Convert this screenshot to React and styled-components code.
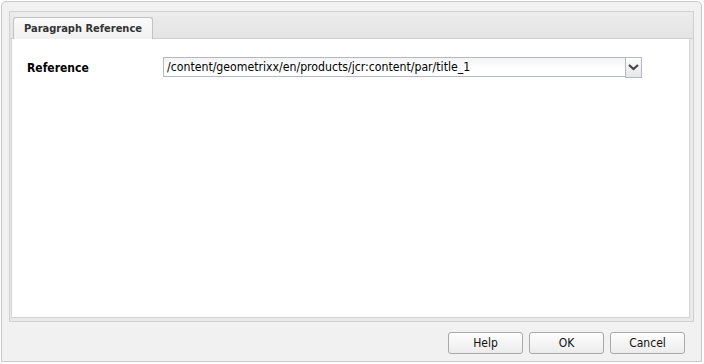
import React from 'react';
import styled, { createGlobalStyle } from 'styled-components';

const Global = createGlobalStyle`
  html, body {
    margin: 0;
    padding: 0;
    background: #ffffff;
  }
  body {
    font-family: 'DejaVu Sans Condensed', Tahoma, 'Liberation Sans', sans-serif;
    font-size: 12px;
    color: #000;
  }
`;

const Window = styled.div`
  box-sizing: border-box;
  width: 701px;
  height: 361px;
  margin: 1px 0 0 1px;
  border: 1px solid #c9c9c9;
  border-radius: 5px 5px 0 0;
  background: #f1f1f1;
  display: flex;
  flex-direction: column;
  padding: 9px 7px 0 7px;
`;

const Panel = styled.div`
  flex: 0 0 auto;
  height: 309px;
  border: 1px solid #d0d0d0;
  background: #e9e9e9;
  display: flex;
  flex-direction: column;
`;

const TabStrip = styled.div`
  height: 23px;
  padding: 3px 0 0 3px;
  display: flex;
  align-items: flex-end;
  border-bottom: 1px solid #cfcfcf;
  background: linear-gradient(#ececec, #e4e4e4);
`;

const Tab = styled.div`
  height: 21px;
  padding: 0 10px;
  margin-bottom: -1px;
  border: 1px solid #c2c2c2;
  border-bottom: none;
  border-radius: 3px 3px 0 0;
  background: linear-gradient(#fafafa, #f1f1f1);
  font-weight: bold;
  font-size: 11px;
  color: #333;
  display: flex;
  align-items: center;
`;

const Body = styled.div`
  flex: 1;
  margin: 0 3px 3px 1px;
  border: 1px solid #d3d3d3;
  border-top: none;
  background: #fff;
  padding: 18px 15px;
`;

const Row = styled.div`
  display: flex;
  align-items: center;
`;

const Label = styled.label`
  width: 136px;
  font-weight: bold;
  font-size: 12px;
`;

const Combo = styled.div`
  display: flex;
  height: 21px;
`;

const Input = styled.div`
  box-sizing: border-box;
  width: 462px;
  height: 20px;
  border: 1px solid #b5b8c8;
  border-right: none;
  background: linear-gradient(#f3f3f3, #fff 60%);
  padding: 2px 3px;
  font-size: 12.2px;
  line-height: 15px;
  white-space: nowrap;
`;

const Trigger = styled.div`
  box-sizing: border-box;
  width: 17px;
  height: 21px;
  border: 1px solid #b5b8c8;
  background: linear-gradient(#fdfdfd, #e6e6e6);
  display: flex;
  align-items: center;
  justify-content: center;
`;

const Footer = styled.div`
  flex: 1;
  display: flex;
  justify-content: flex-end;
  align-items: center;
  gap: 6px;
  padding: 2px 9px 0 0;
`;

const Button = styled.button`
  width: 75px;
  height: 22px;
  border: 1px solid #a9a9a9;
  border-radius: 3px;
  background: linear-gradient(#fdfdfd, #ececec);
  font-family: 'DejaVu Sans Condensed', Tahoma, 'Liberation Sans', sans-serif;
  font-size: 12px;
  color: #111;
  padding: 0;
`;

const Chevron = () => (
  <svg width="11" height="7" viewBox="0 0 11 7">
    <path d="M1 1 L5.5 5 L10 1" fill="none" stroke="#444" strokeWidth="2.2" />
  </svg>
);

export default function App() {
  return (
    <>
      <Global />
      <Window>
        <Panel>
          <TabStrip>
            <Tab>Paragraph Reference</Tab>
          </TabStrip>
          <Body>
            <Row>
              <Label>Reference</Label>
              <Combo>
                <Input>/content/geometrixx/en/products/jcr:content/par/title_1</Input>
                <Trigger>
                  <Chevron />
                </Trigger>
              </Combo>
            </Row>
          </Body>
        </Panel>
        <Footer>
          <Button>Help</Button>
          <Button>OK</Button>
          <Button>Cancel</Button>
        </Footer>
      </Window>
    </>
  );
}
